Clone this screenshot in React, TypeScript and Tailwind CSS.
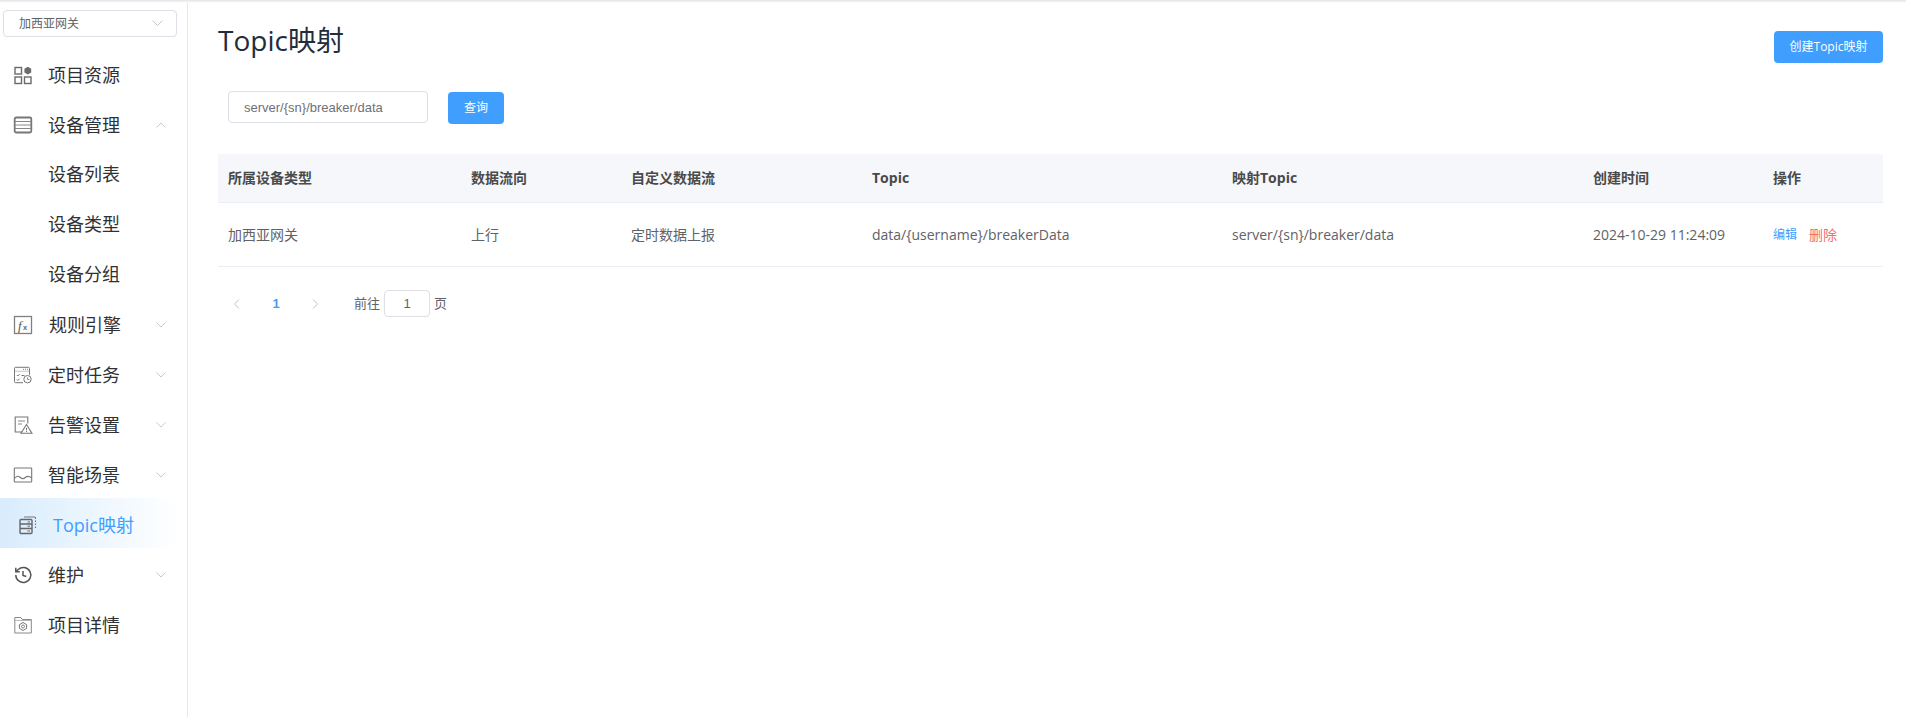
import React from "react";

const S = { fill: "none", stroke: "#6b6b6b", strokeWidth: 1.4 };

function Box({ children }: { children: React.ReactNode }) {
  return (
    <svg width="20" height="20" viewBox="0 0 20 20" className="shrink-0">
      {children}
    </svg>
  );
}

const icons: Record<string, React.ReactNode> = {
  grid: (
    <Box>
      <rect x="2" y="2.500" width="6.500" height="6.500" {...S} />
      <rect x="2" y="12" width="6.500" height="6.500" {...S} />
      <rect x="11.500" y="12" width="6.500" height="6.500" {...S} />
      <path d="M14.800 1.800l3.400 2v3.600l-3.400 2-3.400-2V3.800z" fill="#6b6b6b" />
    </Box>
  ),
  list: (
    <Box>
      <rect x="1.700" y="2.500" width="16.600" height="15" rx="1.500" fill="none" stroke="#777" strokeWidth="1.800" />
      <path d="M1.700 6.500h16.600M1.700 10h16.600M1.700 13.500h16.600" stroke="#888" strokeWidth="1" />
      <path d="M5 5v10" stroke="#fff" strokeWidth="1" strokeDasharray="1 2.500" />
    </Box>
  ),
  fx: (
    <Box>
      <rect x="1.500" y="1.500" width="17" height="17" fill="none" stroke="#808080" strokeWidth="1.300" />
      <text x="5" y="14.500" fontFamily="'Liberation Serif',serif" fontStyle="italic" fontSize="13" fill="#555">f</text>
      <text x="10" y="14.500" fontFamily="'Liberation Sans',sans-serif" fontWeight="700" fontSize="7.500" fill="#666">x</text>
    </Box>
  ),
  cal: (
    <Box>
      <path d="M10 17.700H2.500a1 1 0 0 1-1-1V3.300a1 1 0 0 1 1-1h13a1 1 0 0 1 1 1v6.500" fill="none" stroke="#777" strokeWidth="1" />
      <path d="M1.500 6.200h15M10 4.300h5" stroke="#888" strokeWidth="1" strokeDasharray="1 1" />
      <path d="M3.800 10l1 1 1.800-1.800M3.800 14.500l1 1 1.800-1.800M8.500 10.500h3" fill="none" stroke="#777" strokeWidth="1" />
      <circle cx="14.500" cy="14.200" r="3.700" fill="#fff" stroke="#777" strokeWidth="1" />
      <path d="M14.500 12.400v2h1.800" fill="none" stroke="#777" strokeWidth="0.900" />
    </Box>
  ),
  warn: (
    <Box>
      <path d="M9 17H2.200V2h12.600v6.500" fill="none" stroke="#777" strokeWidth="1.100" />
      <path d="M5 6h7M5 9h4" stroke="#888" strokeWidth="1" />
      <path d="M13.500 9.500l5.500 8.800H8z" fill="#fff" stroke="#777" strokeWidth="1.100" />
      <path d="M13.500 12.800v2.500M13.500 16v1" stroke="#777" strokeWidth="1" />
    </Box>
  ),
  image: (
    <Box>
      <rect x="1.300" y="3" width="17.400" height="14" rx="0.800" fill="none" stroke="#777" strokeWidth="1.100" />
      <path d="M1.500 13.500c2.500-2.800 3.800-2.800 5.800-1s3 1.800 5 0 3.500-1.800 6.200 .3" fill="none" stroke="#777" strokeWidth="1.100" />
    </Box>
  ),
  server: (
    <Box>
      <rect x="2" y="4.500" width="12" height="14" rx="1" fill="none" stroke="#666" strokeWidth="1.400" />
      <path d="M2 9h12M2 13.500h12" stroke="#666" strokeWidth="1.300" />
      <path d="M9.500 7h2.500M9.500 11.200h2.500M9.500 16h2.500" stroke="#666" strokeWidth="1" />
      <path d="M6 2h10.500a1 1 0 0 1 1 1v1" fill="none" stroke="#777" strokeWidth="1.100" />
      <path d="M17.500 5.500v9" stroke="#777" strokeWidth="1.100" strokeDasharray="1.500 1.500" />
    </Box>
  ),
  history: (
    <Box>
      <path d="M2.800 10a7.500 7.500 0 1 0 2.400-5.500L2.800 6.800" fill="none" stroke="#555" strokeWidth="1.500" />
      <path d="M2.800 2.800v4h4" fill="none" stroke="#555" strokeWidth="1.500" />
      <path d="M10 6v4.500l3.300 1" fill="none" stroke="#555" strokeWidth="1.500" />
    </Box>
  ),
  folder: (
    <Box>
      <path d="M1.800 18V2.500h6l1.500 2h9V18z" fill="none" stroke="#888" strokeWidth="1" />
      <path d="M1.800 5.500h16.500" stroke="#aaa" strokeWidth="0.800" />
      <path d="M10 7.500l3.600 2.100v3.800L10 15.500l-3.600-2.100V9.600z" fill="none" stroke="#777" strokeWidth="1" />
      <circle cx="10" cy="11.500" r="1.500" fill="none" stroke="#777" strokeWidth="0.900" />
    </Box>
  ),
};

function Chevron({ up, size = 10, color = "#c0c4cc" }: { up?: boolean; size?: number; color?: string }) {
  return (
    <svg width={size} height={size * 0.6} viewBox="0 0 10 6" className="shrink-0" preserveAspectRatio="none">
      <path d={up ? "M.5 5.500L5 1l4.500 4.500" : "M.5 .5L5 5l4.500-4.500"} fill="none" stroke={color} strokeWidth="0.900" />
    </svg>
  );
}

function MenuItem({ icon, label, arrow, textGap = "ml-[15px]" }: { icon: string; label: string; arrow?: "up" | "down"; textGap?: string }) {
  return (
    <div className="flex h-[50px] items-center pl-[13px] pr-[21px] text-[18px] text-[#303133]">
      {icons[icon]}
      <span className={`${textGap} flex-1 leading-none`}>{label}</span>
      {arrow && <Chevron up={arrow === "up"} />}
    </div>
  );
}

function SubItem({ label }: { label: string }) {
  return <div className="flex h-[50px] items-center pb-[2px] pl-[48px] text-[18px] leading-none text-[#303133]">{label}</div>;
}

const cols = "grid grid-cols-[243px_160px_241px_360px_361px_180px_120px]";

export default function App() {
  const font = "font-['Open_Sans','Noto_Sans_CJK_SC',sans-serif]";
  return (
    <div className={`${font} flex h-screen w-full flex-col overflow-hidden bg-white`}>
      <div className="h-[3px] shrink-0 bg-gradient-to-b from-[#e4e4e4] to-white" />
      <div className="flex min-h-0 flex-1">
        <aside className="w-[188px] shrink-0 border-r border-[#e6e6e6] pt-[7px]">
          <div className="ml-[3px] flex h-[27px] w-[174px] items-center justify-between rounded border border-[#dcdfe6] pl-[15px] pr-[13px] text-[12px] text-[#606266]">
            <span>加西亚网关</span>
            <Chevron size={11} />
          </div>
          <nav className="mt-[13px]">
            <MenuItem icon="grid" label="项目资源" />
            <MenuItem icon="list" label="设备管理" arrow="up" />
            <SubItem label="设备列表" />
            <SubItem label="设备类型" />
            <SubItem label="设备分组" />
            <MenuItem icon="fx" label="规则引擎" arrow="down" textGap="ml-[16px]" />
            <MenuItem icon="cal" label="定时任务" arrow="down" />
            <MenuItem icon="warn" label="告警设置" arrow="down" />
            <MenuItem icon="image" label="智能场景" arrow="down" />
            <div className="-mt-[2px] mb-[2px] flex h-[50px] items-center bg-gradient-to-r from-[#d8ecfd] to-white to-95% pl-[18px] pt-1 text-[18px] text-[#409eff]">
              {icons.server}
              <span className="ml-[15px] leading-none">Topic映射</span>
            </div>
            <MenuItem icon="history" label="维护" arrow="down" />
            <MenuItem icon="folder" label="项目详情" />
          </nav>
        </aside>
        <main className="min-w-0 flex-1 pl-[30px] pr-[23px]">
          <div className="flex items-start justify-between pt-[28px]">
            <h1 className="mt-[-1px] text-[28px] leading-[20px] font-normal text-[#1f2d3d]">Topic映射</h1>
            <button className="h-[32px] w-[109px] rounded bg-[#409eff] text-[12px] text-white">创建Topic映射</button>
          </div>
          <div className="mt-[28px] flex items-start pl-[10px]">
            <input
              readOnly
              value="server/{sn}/breaker/data"
              className="h-[32px] w-[200px] rounded border border-[#dcdfe6] px-[15px] font-['Liberation_Sans',sans-serif] text-[13px] text-[#6f7175] outline-none"
            />
            <button className="ml-[20px] mt-px h-[32px] w-[56px] rounded bg-[#409eff] text-[12px] text-white">查询</button>
          </div>
          <div className="mt-[30px] text-[14px]">
            <div className={`${cols} h-[49px] items-center border-b border-[#ebeef5] bg-[#f5f7fa] pb-[2px] font-bold text-[#4a4a4a]`}>
              {["所属设备类型", "数据流向", "自定义数据流", "Topic", "映射Topic", "创建时间", "操作"].map((t) => (
                <div key={t} className="px-[10px]">{t}</div>
              ))}
            </div>
            <div className={`${cols} h-[64px] items-center border-b border-[#ebeef5] text-[#606266]`}>
              {["加西亚网关", "上行", "定时数据上报", "data/{username}/breakerData", "server/{sn}/breaker/data", "2024-10-29 11:24:09"].map((t) => (
                <div key={t} className="px-[10px]">{t}</div>
              ))}
              <div className="flex items-center gap-[12px] px-[10px]">
                <span className="mt-px text-[12px] text-[#409eff]">编辑</span>
                <span className="text-[14px] text-[#f56c6c]">删除</span>
              </div>
            </div>
          </div>
          <div className="mt-[23px] flex h-[27px] items-center text-[13px] text-[#606266]">
            <div className="flex w-[38px] justify-center"><svg width="8" height="10" viewBox="0 0 8 10"><path d="M6 .5L1.500 5 6 9.500" fill="none" stroke="#c0c4cc" strokeWidth="1" /></svg></div>
            <div className="w-[40px] text-center font-['Liberation_Sans',sans-serif] font-bold text-[#409eff]">1</div>
            <div className="flex w-[38px] justify-center"><svg width="8" height="10" viewBox="0 0 8 10"><path d="M2 .5L6.500 5 2 9.500" fill="none" stroke="#c0c4cc" strokeWidth="1" /></svg></div>
            <span className="ml-[20px]">前往</span>
            <div className="mx-[4px] flex h-[27px] w-[46px] items-center justify-center rounded border border-[#dcdfe6] font-['Liberation_Sans',sans-serif]">1</div>
            <span>页</span>
          </div>
        </main>
      </div>
    </div>
  );
}
